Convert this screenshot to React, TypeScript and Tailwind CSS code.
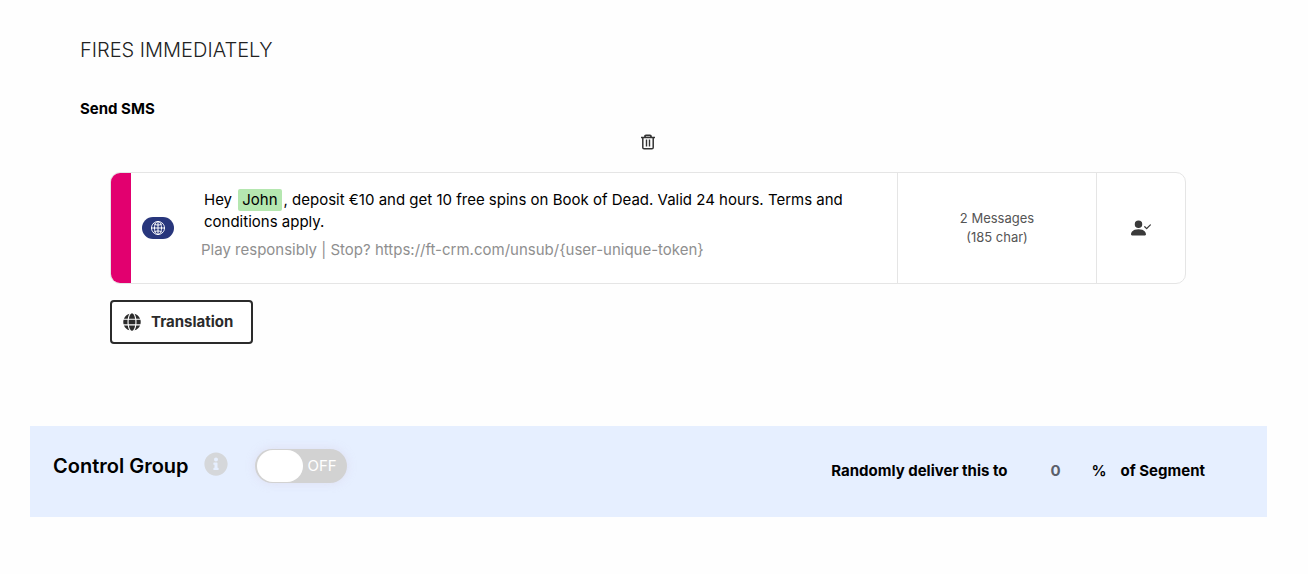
import { useState } from "react";
import { BsPersonCheckFill } from "react-icons/bs";
import { FaGlobe, FaInfoCircle } from "react-icons/fa";
import { IoGlobeOutline } from "react-icons/io5";

function TrashIcon() {
  return (
    <svg width="16" height="16" viewBox="0 0 16 16" fill="none" stroke="currentColor" strokeWidth="1.5">
      <path d="M1 3.5h14" />
      <path d="M5 3.2V2.4Q5 1.4 6 1.4h4q1 0 1 1v.8" strokeWidth="1.8" />
      <path d="M2.8 3.5v10q0 1.3 1.3 1.3h7.8q1.3 0 1.3-1.3v-10" />
      <path d="M6.5 5.5v7M9.5 5.5v7" strokeWidth="1.4" />
    </svg>
  );
}

function MessageCard() {
  return (
    <div className="flex h-28 overflow-hidden rounded-[10px] border border-[#e5e5e5] bg-white">
      <div className="w-5 shrink-0 bg-[#e2006f]" />
      <div className="flex w-[54px] shrink-0 items-center justify-center">
        <span className="flex h-[22px] w-8 items-center justify-center rounded-full bg-[#28367c] text-white">
          <IoGlobeOutline size={16} />
        </span>
      </div>

      {/* Message text */}
      <div className="min-w-0 flex-1 pt-4 pr-7 pl-4">
        <p className="pl-[3px] text-[15px] leading-[22px] text-black">
          Hey <mark className="mx-[2px] inline-block rounded-xs bg-[#b5e7b0] px-1 text-black">John</mark>, deposit €10 and get 10 free spins on Book of Dead. Valid 24 hours. Terms and conditions apply.
        </p>
        <p className="mt-[5px] text-[15px] leading-6 text-[#8f8f8f]">
          Play responsibly | Stop? https://ft-crm.com/unsub/{"{user-unique-token}"}
        </p>
      </div>

      <div className="flex w-[199px] shrink-0 flex-col items-center justify-center border-l border-[#e5e5e5] text-[13px] leading-[19px] text-[#555]">
        <span>2 Messages</span>
        <span>(185 char)</span>
      </div>
      <div className="flex w-[89px] shrink-0 items-center justify-center border-l border-[#e5e5e5] text-[#3a3a3a]">
        <BsPersonCheckFill size={20} />
      </div>
    </div>
  );
}

function ControlGroup() {
  const [enabled, setEnabled] = useState(false);
  const [percent, setPercent] = useState("0");

  return (
    <section className="mt-[82px] mr-[41px] ml-[30px] flex h-[91px] items-start justify-between bg-[#e6efff] pr-[62px] pl-[23px]">
      <div className="flex items-center pt-[22px]">
        <h2 className="text-xl leading-9 font-semibold text-black">Control Group</h2>
        <FaInfoCircle size={24} className="mb-1 ml-[15px] text-[#d5d7da]" />
        <button
          role="switch"
          aria-checked={enabled}
          aria-label="Control Group"
          onClick={() => setEnabled(!enabled)}
          className="ml-[27px] flex h-[34px] w-[92px] cursor-pointer items-center rounded-full bg-[#d2d2d2] px-[2px] text-[15px] text-white shadow-[0_0_10px_rgba(220,215,235,0.7)]"
        >
          <span className="h-8 w-[46px] rounded-full bg-white" />
          <span className="ml-[5px]">{enabled ? "ON" : "OFF"}</span>
        </button>
      </div>

      <div className="flex items-center pt-[34px] text-[15px] leading-[22px] font-bold text-black">
        <label htmlFor="percent">Randomly deliver this to</label>
        <input
          id="percent"
          value={percent}
          onChange={(e) => setPercent(e.target.value)}
          className="ml-3 w-[72px] bg-transparent text-center text-[#5b5f6b] outline-none"
        />
        <span className="font-semibold">%</span>
        <span className="ml-[14px]">of Segment</span>
      </div>
    </section>
  );
}

export default function App() {
  return (
    <main className="min-h-screen bg-[#fefefe] pt-9 pb-10 font-['Inter',sans-serif]">
      <h1 className="ml-20 text-xl leading-7 font-light text-[#222]">FIRES IMMEDIATELY</h1>
      <h2 className="mt-[33px] ml-20 text-[15px] leading-6 font-bold text-black">Send SMS</h2>

      <div className="mt-3 mr-[122px] ml-[110px]">
        <div className="mb-[21px] flex justify-center">
          <button aria-label="Delete message" className="cursor-pointer py-px text-[#333]">
            <TrashIcon />
          </button>
        </div>
        <MessageCard />
        <button className="mt-4 flex h-11 cursor-pointer items-center gap-[10px] rounded-sm border-2 border-[#2b2b2b] bg-white pr-[18px] pl-[11px] text-[15px] font-bold text-[#2b2b2b]">
          <FaGlobe size={18} />
          Translation
        </button>
      </div>

      <ControlGroup />
    </main>
  );
}
